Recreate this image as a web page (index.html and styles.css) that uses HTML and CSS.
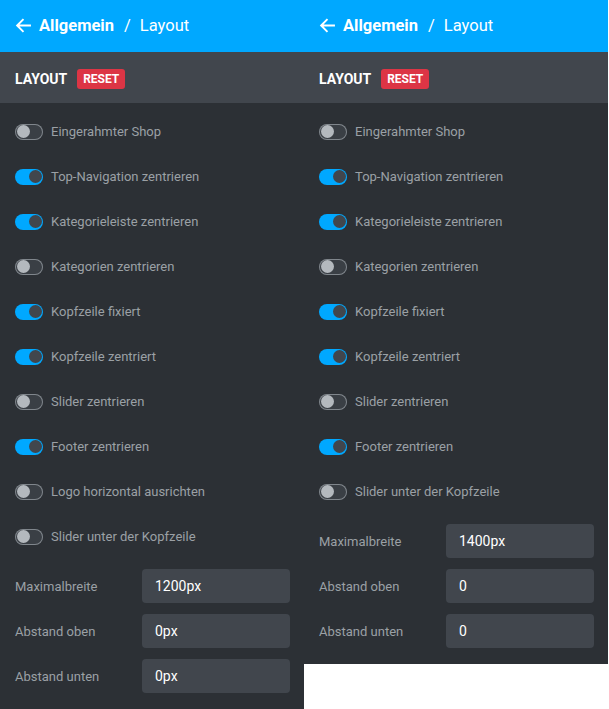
FILE: index.html
```html
<!DOCTYPE html>
<html lang="de">
<head>
  <meta charset="UTF-8">
  <meta name="viewport" content="width=device-width, initial-scale=1.0">
  <title>Layout Einstellungen</title>
  <link rel="stylesheet" href="styles.css">
</head>
<body>
  <div class="screens">

    <!-- Variante 1 -->
    <div class="panel">
      <div class="topbar">
        <svg class="back" width="17" height="17" viewBox="0 0 16 16"><path d="M15 8H2M8 2L2 8l6 6" fill="none" stroke="#fff" stroke-width="1.8"/></svg>
        <span class="crumb">Allgemein</span>
        <span class="sep">/</span>
        <span class="current">Layout</span>
      </div>
      <div class="section-head">
        <span class="section-title">LAYOUT</span>
        <span class="reset">RESET</span>
      </div>
      <div class="section-body">
        <div class="toggle-row"><span class="switch"></span><span class="label">Eingerahmter Shop</span></div>
        <div class="toggle-row"><span class="switch on"></span><span class="label">Top-Navigation zentrieren</span></div>
        <div class="toggle-row"><span class="switch on"></span><span class="label">Kategorieleiste zentrieren</span></div>
        <div class="toggle-row"><span class="switch"></span><span class="label">Kategorien zentrieren</span></div>
        <div class="toggle-row"><span class="switch on"></span><span class="label">Kopfzeile fixiert</span></div>
        <div class="toggle-row"><span class="switch on"></span><span class="label">Kopfzeile zentriert</span></div>
        <div class="toggle-row"><span class="switch"></span><span class="label">Slider zentrieren</span></div>
        <div class="toggle-row"><span class="switch on"></span><span class="label">Footer zentrieren</span></div>
        <div class="toggle-row"><span class="switch"></span><span class="label">Logo horizontal ausrichten</span></div>
        <div class="toggle-row"><span class="switch"></span><span class="label">Slider unter der Kopfzeile</span></div>

        <div class="fields">
          <label class="field-label">Maximalbreite</label><div class="field">1200px</div>
          <label class="field-label">Abstand oben</label><div class="field">0px</div>
          <label class="field-label">Abstand unten</label><div class="field">0px</div>
        </div>
      </div>
    </div>

    <!-- Variante 2 -->
    <div class="panel">
      <div class="topbar">
        <svg class="back" width="17" height="17" viewBox="0 0 16 16"><path d="M15 8H2M8 2L2 8l6 6" fill="none" stroke="#fff" stroke-width="1.8"/></svg>
        <span class="crumb">Allgemein</span>
        <span class="sep">/</span>
        <span class="current">Layout</span>
      </div>
      <div class="section-head">
        <span class="section-title">LAYOUT</span>
        <span class="reset">RESET</span>
      </div>
      <div class="section-body">
        <div class="toggle-row"><span class="switch"></span><span class="label">Eingerahmter Shop</span></div>
        <div class="toggle-row"><span class="switch on"></span><span class="label">Top-Navigation zentrieren</span></div>
        <div class="toggle-row"><span class="switch on"></span><span class="label">Kategorieleiste zentrieren</span></div>
        <div class="toggle-row"><span class="switch"></span><span class="label">Kategorien zentrieren</span></div>
        <div class="toggle-row"><span class="switch on"></span><span class="label">Kopfzeile fixiert</span></div>
        <div class="toggle-row"><span class="switch on"></span><span class="label">Kopfzeile zentriert</span></div>
        <div class="toggle-row"><span class="switch"></span><span class="label">Slider zentrieren</span></div>
        <div class="toggle-row"><span class="switch on"></span><span class="label">Footer zentrieren</span></div>
        <div class="toggle-row"><span class="switch"></span><span class="label">Slider unter der Kopfzeile</span></div>

        <div class="fields">
          <label class="field-label">Maximalbreite</label><div class="field">1400px</div>
          <label class="field-label">Abstand oben</label><div class="field">0</div>
          <label class="field-label">Abstand unten</label><div class="field">0</div>
        </div>
      </div>
    </div>

  </div>
</body>
</html>
```

FILE: styles.css
```css
* {
  box-sizing: border-box;
}
html,
body {
  margin: 0;
  background: #fff;
  font-family: Roboto, "Liberation Sans", Arial, sans-serif;
}

.screens {
  display: flex;
  align-items: flex-start;
}

.panel {
  width: 304px;
  background: #2c3035;
}

/* Kopfzeile */
.topbar {
  height: 52px;
  background: #00a8ff;
  color: #fff;
  display: flex;
  align-items: center;
  padding: 0 0 2px 15px;
  font-size: 16.5px;
}
.back {
  margin-right: 7px;
}
.crumb {
  font-weight: 700;
}
.sep {
  margin: 0 9px 0 10px;
}

/* Abschnitt */
.section-head {
  height: 51px;
  background: #41464d;
  display: flex;
  align-items: center;
  padding: 2px 0 0 15px;
}
.section-title {
  color: #fff;
  font-weight: 700;
  font-size: 14px;
  margin-right: 10px;
}
.reset {
  background: #dc3545;
  color: #fff;
  font-weight: 700;
  font-size: 12px;
  height: 20px;
  width: 48px;
  border-radius: 3px;
  display: flex;
  align-items: center;
  justify-content: center;
}

.section-body {
  padding: 6px 14px 16px 15px;
}

.toggle-row {
  height: 45px;
  display: flex;
  align-items: center;
}
.switch {
  position: relative;
  width: 28px;
  height: 16px;
  border-radius: 8px;
  box-shadow: inset 0 0 0 1px #80868c;
  background: #3a3f45;
  margin-right: 8px;
  flex-shrink: 0;
}
.switch::after {
  content: "";
  position: absolute;
  top: 1.5px; left: 1.5px;
  width: 13px;
  height: 13px;
  border-radius: 50%;
  background: #b4b9be;
}
.switch.on {
  background: #00a8ff;
  box-shadow: none;
}
.switch.on::after {
  left: auto; right: 1.5px;
  background: #41464d;
}
.label {
  color: #9ba0a5;
  font-size: 13px;
}

/* Eingabefelder */
.fields {
  margin-top: 10px;
  display: grid;
  grid-template-columns: 127px 1fr;
  row-gap: 11px;
  align-items: center;
}
.field-label {
  color: #9ba0a5;
  font-size: 13px;
}
.field {
  height: 34px;
  background: #41464d;
  border-radius: 4px;
  color: #fff;
  font-size: 14px;
  display: flex;
  align-items: center;
  padding-left: 13px;
}
```
